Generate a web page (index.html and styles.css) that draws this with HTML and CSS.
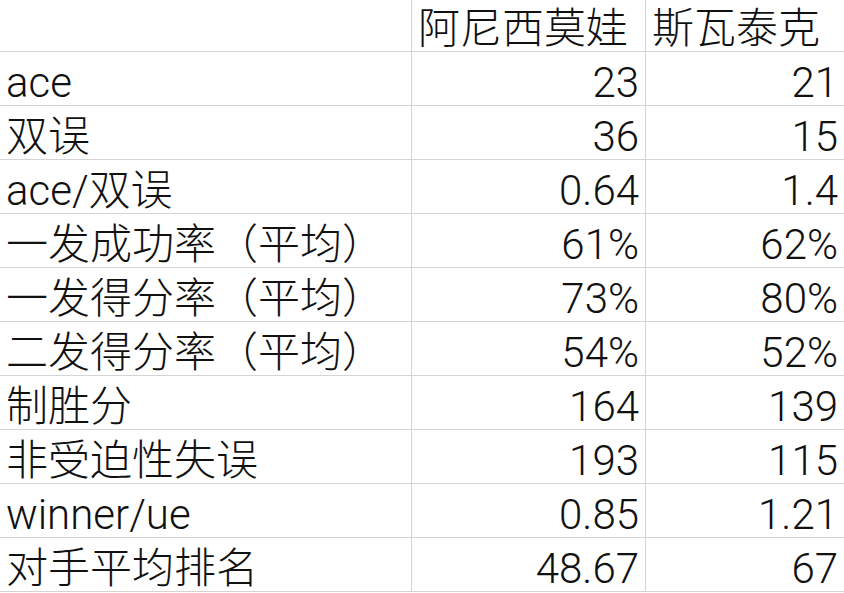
FILE: index.html
```html
<!DOCTYPE html>
<html lang="zh-CN">
<head>
<meta charset="utf-8">
<title>对比</title>
<link rel="stylesheet" href="styles.css">
</head>
<body>
<div class="sheet">
  <div class="cell"></div>
  <div class="cell">阿尼西莫娃</div>
  <div class="cell">斯瓦泰克</div>

  <div class="cell">ace</div>
  <div class="cell num">23</div>
  <div class="cell num">21</div>

  <div class="cell">双误</div>
  <div class="cell num">36</div>
  <div class="cell num">15</div>

  <div class="cell">ace/双误</div>
  <div class="cell num">0.64</div>
  <div class="cell num">1.4</div>

  <div class="cell">一发成功率（平均）</div>
  <div class="cell num">61%</div>
  <div class="cell num">62%</div>

  <div class="cell">一发得分率（平均）</div>
  <div class="cell num">73%</div>
  <div class="cell num">80%</div>

  <div class="cell">二发得分率（平均）</div>
  <div class="cell num">54%</div>
  <div class="cell num">52%</div>

  <div class="cell">制胜分</div>
  <div class="cell num">164</div>
  <div class="cell num">139</div>

  <div class="cell">非受迫性失误</div>
  <div class="cell num">193</div>
  <div class="cell num">115</div>

  <div class="cell">winner/ue</div>
  <div class="cell num">0.85</div>
  <div class="cell num">1.21</div>

  <div class="cell">对手平均排名</div>
  <div class="cell num">48.67</div>
  <div class="cell num">67</div>
</div>
</body>
</html>
```

FILE: styles.css
```css
html, body {
  margin: 0;
  padding: 0;
  background: #ffffff;
}

body {
  width: 844px;
  height: 593px;
  overflow: hidden;
  font-family: Roboto, "Noto Sans CJK SC", sans-serif;
  font-weight: 300;
  color: #111111;
}

.sheet {
  display: grid;
  grid-template-columns: 411px 233px 1fr;
  grid-template-rows: 51px repeat(10, 53px);
  gap: 1px;
  padding-bottom: 1px;
  background: #d4d4d4;
}

.cell {
  background: #ffffff;
  display: flex;
  align-items: flex-end;
  justify-content: flex-start;
  padding: 0 6px 0 6px;
  font-size: 42px;
  line-height: 44px;
  white-space: nowrap;
}

.num {
  justify-content: flex-end;
}
```
